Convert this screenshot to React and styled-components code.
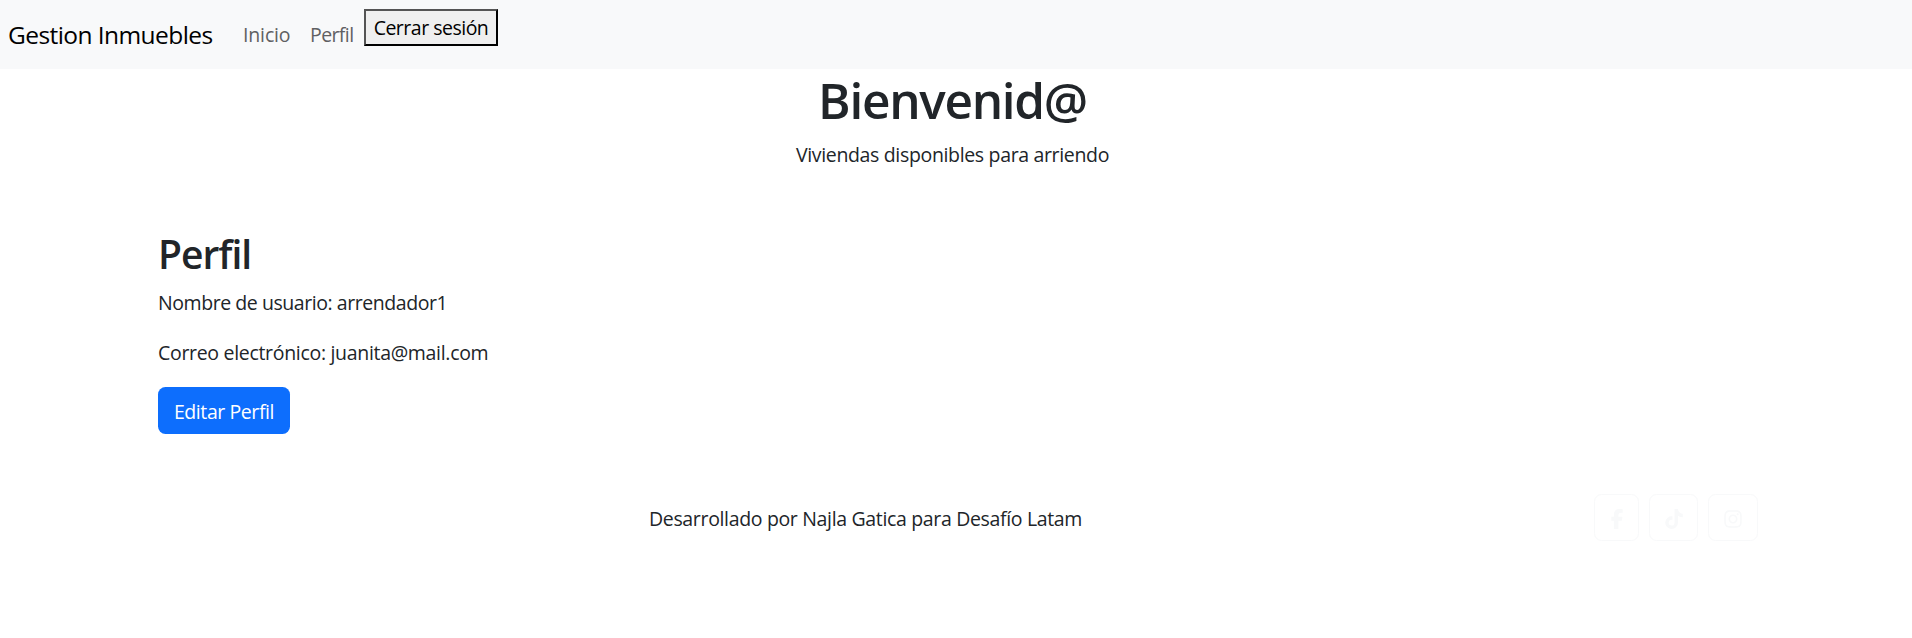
import React from "react";
import styled, { createGlobalStyle } from "styled-components";
import { FaFacebookF, FaTiktok, FaInstagram } from "react-icons/fa6";

const GlobalStyle = createGlobalStyle`
  *, *::before, *::after { box-sizing: border-box; }
  body {
    margin: 0;
    background: #fff;
    color: #212529;
    font-family: "Segoe UI", "Open Sans", "Noto Sans", sans-serif;
    font-size: 19.5px;
    font-weight: 400;
    line-height: 30px;
  }
  h1, h2, p { margin: 0; }
`;

const Navbar = styled.nav`
  display: flex;
  align-items: center;
  height: 69px;
  padding: 0 8px;
  background: #f8f9fa;
  white-space: nowrap;
`;

const Brand = styled.a`
  width: 205px;
  margin-right: 20px;
  color: #000;
  font-size: 24.5px;
  letter-spacing: -0.57px;
  line-height: 38px;
`;

const NavList = styled.div`
  display: flex;
  align-items: flex-start;
`;

const NavLink = styled.a`
  width: ${(p) => p.$width}px;
  padding: 10px;
  color: #5f6062;
  letter-spacing: ${(p) => p.$tracking}px;
`;

const LogoutButton = styled.button`
  width: 134px;
  height: 37px;
  padding: 2px 0 0;
  margin-top: -1px;
  border: 2px outset #000;
  background: #efefef;
  color: #000;
  font: inherit;
  letter-spacing: -0.5px;
`;

const Header = styled.header`
  display: flex;
  flex-direction: column;
  align-items: center;
  padding: 1px 7px 0 0;
`;

const Title = styled.h1`
  margin-bottom: 10px;
  font-size: 49.5px;
  font-weight: 600;
  letter-spacing: -1.3px;
  line-height: 60px;
`;

const Subtitle = styled.p`
  letter-spacing: -0.34px;
`;

const Profile = styled.main`
  width: 1626px;
  margin: 0 auto;
  padding: 60px 15px;
`;

const Heading = styled.h2`
  margin-bottom: 10px;
  font-size: 39px;
  font-weight: 600;
  letter-spacing: -1px;
  line-height: 48px;
`;

const Field = styled.p`
  height: 30px;
  margin-bottom: ${(p) => (p.$last ? 19 : 20)}px;
  letter-spacing: ${(p) => (p.$last ? -0.31 : -0.44)}px;
`;

const EditButton = styled.button`
  display: block;
  width: 132px;
  height: 47px;
  padding: 2px 0 0;
  border: 0;
  border-radius: 7.5px;
  background: #0d6efd;
  color: #fff;
  font: inherit;
  letter-spacing: -0.42px;
`;

const Footer = styled.footer`
  display: grid;
  grid-template-columns: 492px 1fr auto;
  align-items: center;
  width: 1626px;
  margin: 0 auto;
  padding: 0 11px 0 14px;
`;

const Credit = styled.p`
  grid-column: 2;
  padding-top: 2px;
  letter-spacing: -0.34px;
`;

const Socials = styled.div`
  display: flex;
  gap: 10px;
`;

const SocialLink = styled.a`
  display: flex;
  align-items: center;
  justify-content: center;
  width: ${(p) => p.$width}px;
  height: 47px;
  padding-top: 2px;
  border: 1px solid #f8f9fa;
  border-radius: 7.5px;
  color: #f8f9fa;
  font-size: 20px;
`;

export default function App() {
  return (
    <>
      <GlobalStyle />
      <Navbar>
        <Brand>Gestion Inmuebles</Brand>
        <NavList>
          <NavLink $width={67} $tracking={-0.15}>Inicio</NavLink>
          <NavLink $width={64} $tracking={-0.6}>Perfil</NavLink>
          <LogoutButton>Cerrar sesión</LogoutButton>
        </NavList>
      </Navbar>
      <Header>
        <Title>Bienvenid@</Title>
        <Subtitle>Viviendas disponibles para arriendo</Subtitle>
      </Header>
      <Profile>
        <Heading>Perfil</Heading>
        <Field>Nombre de usuario: arrendador1</Field>
        <Field $last>Correo electrónico: juanita@mail.com</Field>
        <EditButton>Editar Perfil</EditButton>
      </Profile>
      <Footer>
        <Credit>Desarrollado por Najla Gatica para Desafío Latam</Credit>
        <Socials>
          <SocialLink $width={45} aria-label="Facebook"><FaFacebookF /></SocialLink>
          <SocialLink $width={49} aria-label="TikTok"><FaTiktok /></SocialLink>
          <SocialLink $width={50} aria-label="Instagram"><FaInstagram /></SocialLink>
        </Socials>
      </Footer>
    </>
  );
}
